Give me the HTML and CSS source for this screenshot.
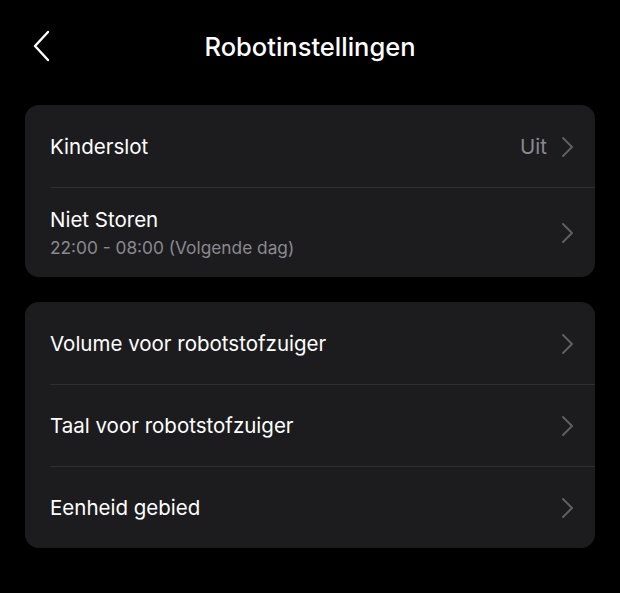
FILE: index.html
```html
<!DOCTYPE html>
<html lang="nl">
<head>
<meta charset="utf-8">
<title>Robotinstellingen</title>
<link rel="stylesheet" href="styles.css">
</head>
<body>
<div class="screen">
  <header class="nav">
    <button class="back" aria-label="Terug">
      <svg width="18" height="32" viewBox="0 0 18 32"><path d="M16 2 L3 16 L16 30" fill="none" stroke="#fff" stroke-width="2.4" stroke-linecap="round" stroke-linejoin="round"/></svg>
    </button>
    <h1 class="title">Robotinstellingen</h1>
  </header>

  <section class="card">
    <div class="row">
      <div class="label">Kinderslot</div>
      <div class="value">Uit</div>
      <svg class="chev" width="14" height="22" viewBox="0 0 14 22"><path d="M2 2 L11 11 L2 20" fill="none" stroke="#5f5f63" stroke-width="2" stroke-linecap="round" stroke-linejoin="round"/></svg>
    </div>
    <div class="row tall">
      <div class="texts">
        <div class="label">Niet Storen</div>
        <div class="sub">22:00 - 08:00 (Volgende dag)</div>
      </div>
      <svg class="chev" width="14" height="22" viewBox="0 0 14 22"><path d="M2 2 L11 11 L2 20" fill="none" stroke="#5f5f63" stroke-width="2" stroke-linecap="round" stroke-linejoin="round"/></svg>
    </div>
  </section>

  <section class="card">
    <div class="row">
      <div class="label">Volume voor robotstofzuiger</div>
      <svg class="chev" width="14" height="22" viewBox="0 0 14 22"><path d="M2 2 L11 11 L2 20" fill="none" stroke="#5f5f63" stroke-width="2" stroke-linecap="round" stroke-linejoin="round"/></svg>
    </div>
    <div class="row">
      <div class="label">Taal voor robotstofzuiger</div>
      <svg class="chev" width="14" height="22" viewBox="0 0 14 22"><path d="M2 2 L11 11 L2 20" fill="none" stroke="#5f5f63" stroke-width="2" stroke-linecap="round" stroke-linejoin="round"/></svg>
    </div>
    <div class="row">
      <div class="label">Eenheid gebied</div>
      <svg class="chev" width="14" height="22" viewBox="0 0 14 22"><path d="M2 2 L11 11 L2 20" fill="none" stroke="#5f5f63" stroke-width="2" stroke-linecap="round" stroke-linejoin="round"/></svg>
    </div>
  </section>
</div>
</body>
</html>
```

FILE: styles.css
```css
* { box-sizing: border-box; }
html, body { margin: 0; padding: 0; background: #000; }
body {
  font-family: Inter, "Noto Sans", "Liberation Sans", sans-serif;
  color: #fff;
  width: 620px;
  height: 593px;
  overflow: hidden;
}
.screen {
  padding: 0 25px;
}
.nav {
  height: 105px;
  display: flex;
  align-items: flex-start;
  justify-content: center;
  position: relative;
}
.back {
  position: absolute;
  left: 7px;
  top: 30px;
  background: none;
  border: 0;
  padding: 0;
  width: 18px;
  height: 32px;
}
.back svg { display: block; }
.title {
  margin: 0;
  margin-top: 31px;
  font-size: 25.5px;
  font-weight: 500;
  letter-spacing: 0;
  line-height: 32px;
}
.card {
  background: #1c1c1e;
  border-radius: 14px;
  margin-bottom: 25px;
  overflow: hidden;
}
.row {
  height: 82px;
  display: flex;
  align-items: center;
  padding: 1px 20px 0 25px;
  position: relative;
}
.row + .row::before {
  content: "";
  position: absolute;
  left: 25px;
  right: 0;
  top: 0;
  height: 1px;
  background: #2e2e31;
}
.row.tall { height: 90px; }
.texts { flex: 1; display: flex; flex-direction: column; gap: 4px; margin-top: 1px; }
.label {
  flex: 1;
  font-size: 20.5px;
  line-height: 26px;
  letter-spacing: 0;
}
.texts .label { flex: none; }
.sub {
  font-size: 17.3px;
  color: #8a8a8e;
  line-height: 22px;
}
.value {
  font-size: 20.5px;
  color: #8a8a8e;
  margin-right: 14px;
}
.chev { display: block; flex: none; }
```
